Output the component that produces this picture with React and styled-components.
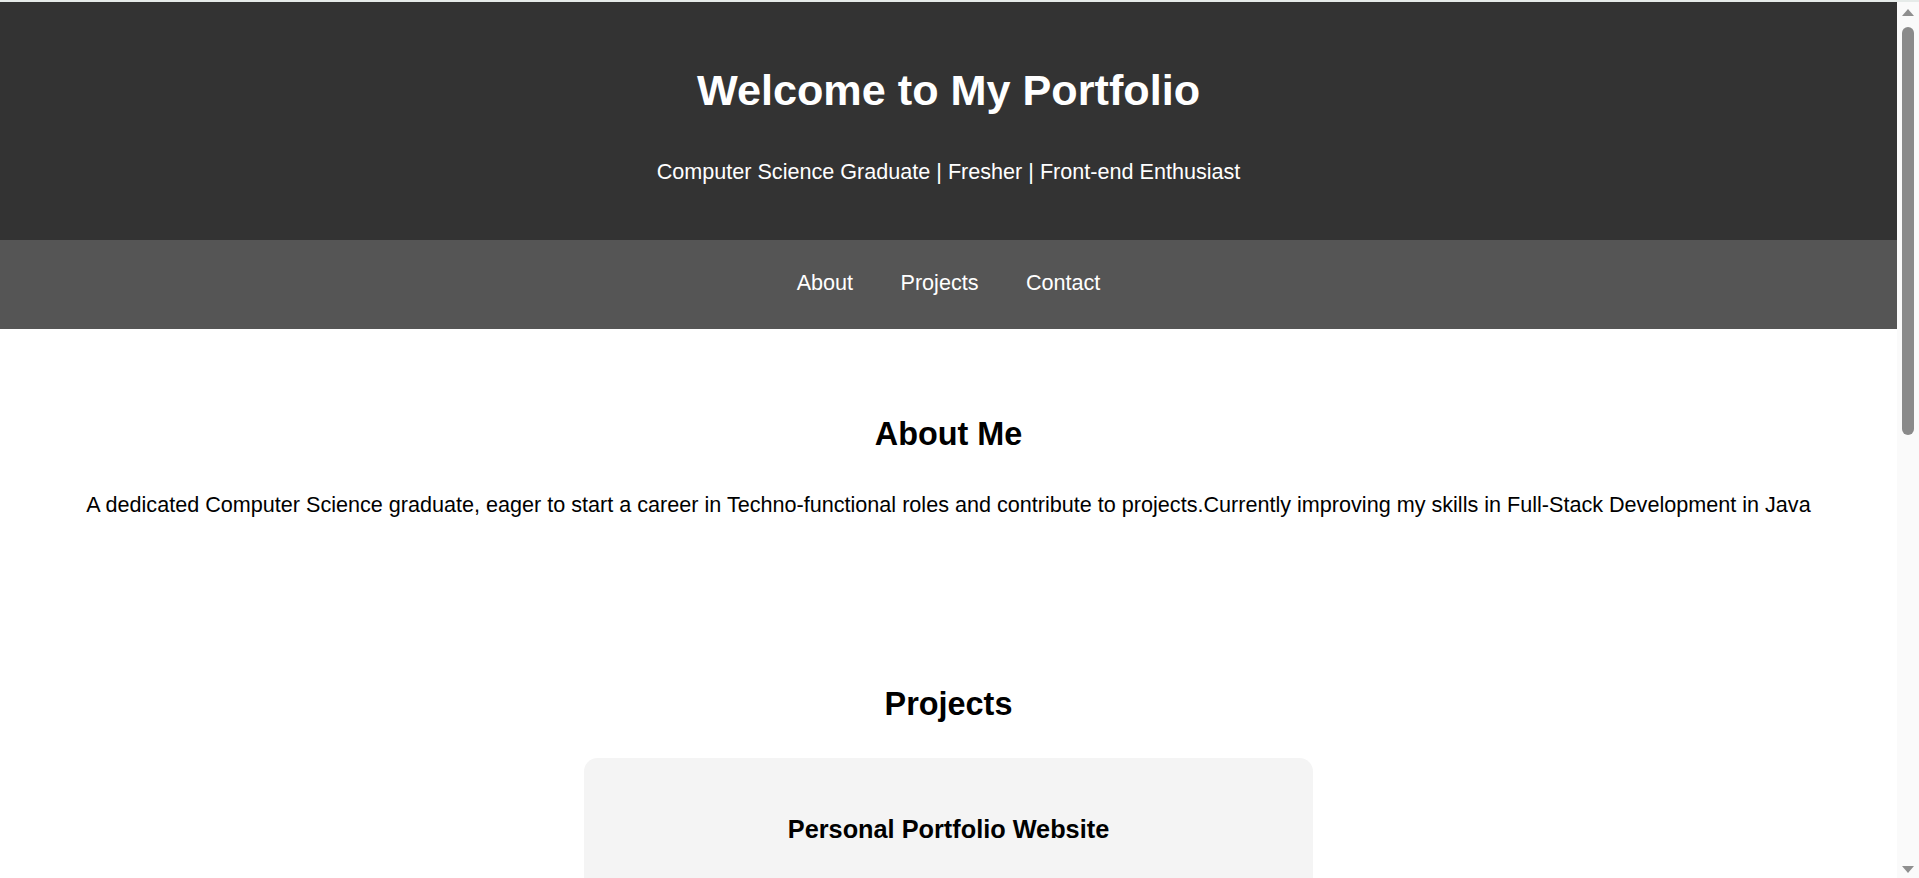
import React from 'react';
import styled, { createGlobalStyle } from 'styled-components';

const GlobalStyle = createGlobalStyle`
  html, body {
    margin: 0;
    padding: 0;
    background: #fff;
  }

  body {
    font-family: "Liberation Sans", Arial, sans-serif;
    font-size: 21.6px;
    color: #000;
  }
`;

const Page = styled.div`
  border-top: 2px solid #e6ebe9;
  margin-right: 22px;
`;

// imitation of the browser's classic scrollbar shown in the screenshot
const Scrollbar = styled.div`
  position: fixed;
  top: 0;
  right: 0;
  width: 22px;
  height: 100vh;
  background: #fafafa;
  border-top: 2px solid #e6ebe9;
  box-sizing: border-box;
`;

const Arrow = styled.div`
  position: absolute;
  left: 5px;
  width: 0;
  height: 0;
  border-left: 6px solid transparent;
  border-right: 6px solid transparent;
  ${({ $down }) => ($down
    ? 'bottom: 5px; border-top: 7px solid #8f8f8f;'
    : 'top: 7px; border-bottom: 7px solid #8f8f8f;')}
`;

const Thumb = styled.div`
  position: absolute;
  top: 25px;
  left: 5px;
  width: 12px;
  height: 408px;
  border-radius: 6px;
  background: #8a8a8a;
`;

const Header = styled.header`
  background: #333;
  color: #fff;
  padding: 64px 20px 55px;
  text-align: center;
`;

const Title = styled.h1`
  font-size: 43.2px;
  margin: 0 0 43.8px;
`;

const Tagline = styled.p`
  margin: 0;
`;

const Nav = styled.nav`
  background: #555;
  padding: 30px 0 33px;
  text-align: center;
`;

const NavLink = styled.a`
  color: #fff;
  margin: 0 23.7px;
  text-decoration: none;
`;

const Section = styled.section`
  padding: 60px 20px 59px;
  text-align: center;
`;

const SectionTitle = styled.h2`
  font-size: 32.4px;
  margin: 27px 0 35px;
`;

const Text = styled.p`
  margin: 39.4px 0 21.6px;
`;

const ProjectCard = styled.div`
  background: #f4f4f4;
  border-radius: 13.5px;
  margin: 0 auto 40px;
  max-width: 729px;
  padding: 32.4px;
  box-sizing: border-box;
`;

const ProjectTitle = styled.h3`
  font-size: 25.3px;
  margin: 25.3px 0 40px;
`;

const ProjectText = styled.p`
  margin: 21.6px 0;
  line-height: 1.5;
`;

const ProjectLink = styled.a`
  color: #333;
  font-weight: bold;
`;

const ContactList = styled.ul`
  list-style: none;
  margin: 0;
  padding: 0;
  line-height: 2;
`;

const Footer = styled.footer`
  background: #333;
  color: #fff;
  padding: 27px;
  text-align: center;
`;

const projects = [
  {
    title: 'Personal Portfolio Website',
    text: 'A responsive portfolio website built with HTML and CSS to showcase my skills, projects and contact details.',
    tech: 'HTML, CSS',
  },
  {
    title: 'Student Management System',
    text: 'A Java application to add, update, search and delete student records, backed by a MySQL database.',
    tech: 'Java, JDBC, MySQL',
  },
  {
    title: 'To-Do List App',
    text: 'A simple task manager that lets users add, complete and remove daily tasks, saved in local storage.',
    tech: 'HTML, CSS, JavaScript',
  },
  {
    title: 'Library Management System',
    text: 'A console based application for issuing and returning books, with fine calculation for late returns.',
    tech: 'Java, OOP',
  },
];

const App = () => (
  <>
    <GlobalStyle />
    <Page>
      <Header>
        <Title>Welcome to My Portfolio</Title>
        <Tagline>Computer Science Graduate | Fresher | Front-end Enthusiast</Tagline>
      </Header>
      <Nav>
        <NavLink href="#about">About</NavLink>
        <NavLink href="#projects">Projects</NavLink>
        <NavLink href="#contact">Contact</NavLink>
      </Nav>
      <Section id="about">
        <SectionTitle>About Me</SectionTitle>
        <Text>
          A dedicated Computer Science graduate, eager to start a career in Techno-functional roles and contribute to projects.Currently improving my skills in Full-Stack Development in Java
        </Text>
      </Section>
      <Section id="projects">
        <SectionTitle>Projects</SectionTitle>
        {projects.map((p) => (
          <ProjectCard key={p.title}>
            <ProjectTitle>{p.title}</ProjectTitle>
            <ProjectText>{p.text}</ProjectText>
            <ProjectText>Technologies: {p.tech}</ProjectText>
            <ProjectLink href="#projects">View Project</ProjectLink>
          </ProjectCard>
        ))}
      </Section>
      <Section id="contact">
        <SectionTitle>Contact</SectionTitle>
        <ContactList>
          <li>Email: myportfolio@example.com</li>
          <li>Phone: +91 98765 43210</li>
          <li>LinkedIn: linkedin.com/in/myportfolio</li>
          <li>GitHub: github.com/myportfolio</li>
        </ContactList>
      </Section>
      <Footer>&copy; 2024 My Portfolio. All rights reserved.</Footer>
    </Page>
    <Scrollbar>
      <Arrow />
      <Thumb />
      <Arrow $down />
    </Scrollbar>
  </>
);

export default App;
